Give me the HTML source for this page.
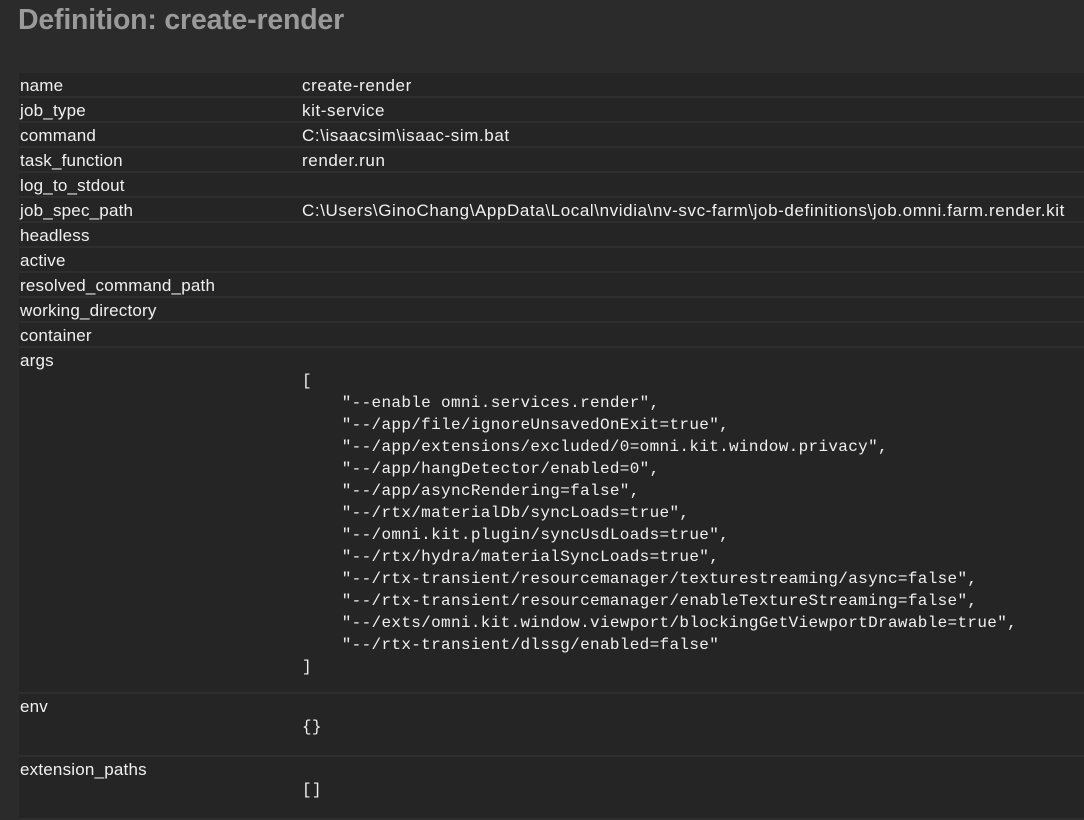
<!DOCTYPE html>
<html><head><style>
html,body{margin:0;padding:0;background:#2b2b2b;width:1084px;height:782px;overflow:hidden}
h1{position:absolute;left:18px;top:4px;margin:0;font:bold 28.5px "Liberation Sans",sans-serif;color:#9a9a9a;letter-spacing:-0.2px}
.t{position:absolute;left:19px;top:73px;width:1065px}
.r{background:#252525;border-bottom:2px solid #2e2e2e;box-sizing:border-box;height:25px;position:relative;font:17px "Liberation Sans",sans-serif;color:#f0f0f0;letter-spacing:0.6px}
.k{position:absolute;left:1px;top:3px;letter-spacing:0.2px}
.v{position:absolute;left:283px;top:3px;white-space:nowrap}
pre{position:absolute;left:283px;margin:0;font:16px "Liberation Mono",monospace;line-height:22px;color:#f0f0f0;letter-spacing:0.33px}
</style></head><body>
<h1>Definition: create-render</h1>
<div class="t">
<div class="r"><span class="k">name</span><span class="v">create-render</span></div>
<div class="r"><span class="k">job_type</span><span class="v">kit-service</span></div>
<div class="r"><span class="k">command</span><span class="v">C:\isaacsim\isaac-sim.bat</span></div>
<div class="r"><span class="k">task_function</span><span class="v">render.run</span></div>
<div class="r"><span class="k">log_to_stdout</span></div>
<div class="r"><span class="k">job_spec_path</span><span class="v">C:\Users\GinoChang\AppData\Local\nvidia\nv-svc-farm\job-definitions\job.omni.farm.render.kit</span></div>
<div class="r"><span class="k">headless</span></div>
<div class="r"><span class="k">active</span></div>
<div class="r"><span class="k">resolved_command_path</span></div>
<div class="r"><span class="k">working_directory</span></div>
<div class="r"><span class="k">container</span></div>
<div class="r" style="height:346px"><span class="k">args</span><pre style="top:22px">[
    "--enable omni.services.render",
    "--/app/file/ignoreUnsavedOnExit=true",
    "--/app/extensions/excluded/0=omni.kit.window.privacy",
    "--/app/hangDetector/enabled=0",
    "--/app/asyncRendering=false",
    "--/rtx/materialDb/syncLoads=true",
    "--/omni.kit.plugin/syncUsdLoads=true",
    "--/rtx/hydra/materialSyncLoads=true",
    "--/rtx-transient/resourcemanager/texturestreaming/async=false",
    "--/rtx-transient/resourcemanager/enableTextureStreaming=false",
    "--/exts/omni.kit.window.viewport/blockingGetViewportDrawable=true",
    "--/rtx-transient/dlssg/enabled=false"
]</pre></div>
<div class="r" style="height:63px"><span class="k">env</span><pre style="top:22px">{}</pre></div>
<div class="r" style="height:63px"><span class="k">extension_paths</span><pre style="top:22px">[]</pre></div>
</div>
</body></html>
